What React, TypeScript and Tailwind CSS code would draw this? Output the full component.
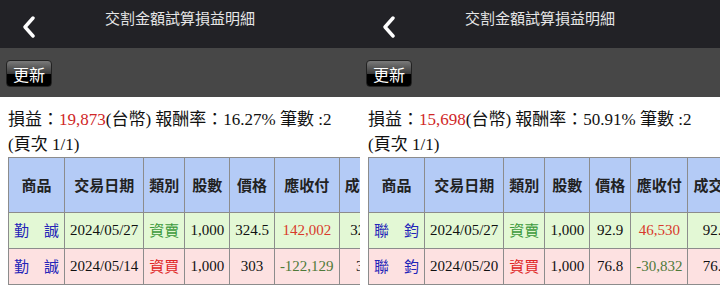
import React from 'react';

type Row = {
  name: string;
  date: string;
  kind: '資賣' | '資買';
  qty: string;
  price: string;
  amount: string;
  deal: string;
};

type PanelData = {
  profit: string;
  rate: string;
  rows: Row[];
};

const panels: PanelData[] = [
  {
    profit: '19,873',
    rate: '16.27%',
    rows: [
      { name: '勤　誠', date: '2024/05/27', kind: '資賣', qty: '1,000', price: '324.5', amount: '142,002', deal: '324.5' },
      { name: '勤　誠', date: '2024/05/14', kind: '資買', qty: '1,000', price: '303', amount: '-122,129', deal: '303' },
    ],
  },
  {
    profit: '15,698',
    rate: '50.91%',
    rows: [
      { name: '聯　鈞', date: '2024/05/27', kind: '資賣', qty: '1,000', price: '92.9', amount: '46,530', deal: '92.9' },
      { name: '聯　鈞', date: '2024/05/20', kind: '資買', qty: '1,000', price: '76.8', amount: '-30,832', deal: '76.8' },
    ],
  },
];

const headers = ['商品', '交易日期', '類別', '股數', '價格', '應收付', '成交價', '手續費'];

function Panel({ data }: { data: PanelData }) {
  return (
    <div className="w-[360px] shrink-0 overflow-hidden bg-white">
      {/* title bar */}
      <div className="relative h-[48px] bg-[#222226]">
        <svg className="absolute left-[22px] top-[16px]" width="14" height="22" viewBox="0 0 14 22">
          <path d="M11 2 L3 11 L11 20" fill="none" stroke="#fff" strokeWidth="3.4" strokeLinecap="round" strokeLinejoin="round" />
        </svg>
        <div className="pt-[8px] text-center text-[15px] leading-[22px] text-[#e6e6e6] font-['Liberation_Sans','Noto_Sans_CJK_TC',sans-serif]">
          交割金額試算損益明細
        </div>
      </div>

      {/* toolbar */}
      <div className="h-[49px] bg-[#474747] px-[6px] pt-[12px]">
        <button className="h-[27px] w-[46px] rounded-[4px] border border-[#222] bg-[linear-gradient(#7a7a7a_0%,#3c3c3c_50%,#000_50%,#000_100%)] text-[16px] leading-[24px] text-white font-['Noto_Sans_CJK_TC',sans-serif]">
          更新
        </button>
      </div>

      {/* content */}
      <div className="px-2 pt-[10px] pb-4 font-['Liberation_Serif','Noto_Sans_CJK_TC',serif] text-[#111]">
        <div className="text-[17px] leading-[26px] whitespace-nowrap">
          損益：<span className="text-[#d02828]">{data.profit}</span>(台幣) 報酬率：{data.rate} 筆數 :2
        </div>
        <div className="text-[17px] leading-[24px]">(頁次 1/1)</div>

        <table className="border-collapse text-[15px] whitespace-nowrap">
          <thead>
            <tr className="h-[55px] bg-[#b4cbf6]">
              {headers.map((h) => (
                <th
                  key={h}
                  className="border border-[#8c8c8c] px-[5px] font-bold text-[#222] font-['Noto_Sans_CJK_TC',sans-serif]"
                >
                  {h}
                </th>
              ))}
            </tr>
          </thead>
          <tbody>
            {data.rows.map((r, i) => {
              const sell = r.kind === '資賣';
              return (
                <tr key={i} className={`h-[36px] text-center ${sell ? 'bg-[#e3f8d5]' : 'bg-[#fde1e1]'}`}>
                  <td className="border border-[#8c8c8c] px-[5px] text-[#2424b8] font-['Noto_Sans_CJK_TC',sans-serif]">
                    {r.name}
                  </td>
                  <td className="border border-[#8c8c8c] px-[5px]">{r.date}</td>
                  <td
                    className={`border border-[#8c8c8c] px-[5px] font-['Noto_Sans_CJK_TC',sans-serif] ${
                      sell ? 'text-[#3c9a3c]' : 'text-[#e02424]'
                    }`}
                  >
                    {r.kind}
                  </td>
                  <td className="border border-[#8c8c8c] px-[5px]">{r.qty}</td>
                  <td className="border border-[#8c8c8c] px-[5px]">{r.price}</td>
                  <td className={`border border-[#8c8c8c] px-[5px] ${sell ? 'text-[#d83a2c]' : 'text-[#4f7a3a]'}`}>
                    {r.amount}
                  </td>
                  <td className="border border-[#8c8c8c] px-[5px]">{r.deal}</td>
                  <td className="border border-[#8c8c8c] px-[5px]">20</td>
                </tr>
              );
            })}
          </tbody>
        </table>
      </div>
    </div>
  );
}

export default function App() {
  return (
    <div className="flex w-[720px] bg-white">
      {panels.map((p, i) => (
        <Panel key={i} data={p} />
      ))}
    </div>
  );
}
